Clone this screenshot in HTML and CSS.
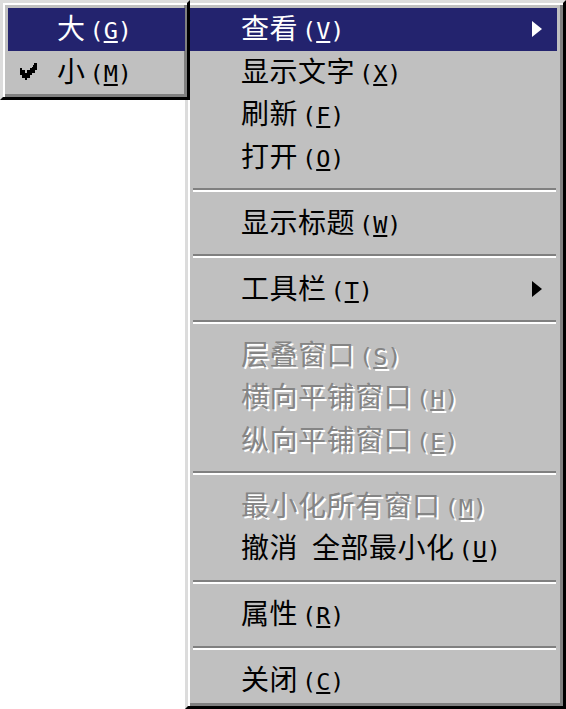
FILE: index.html
```html
<!DOCTYPE html>
<html lang="zh-CN">
<head>
    <meta charset="UTF-8">
    <title>桌面菜单</title>
    <link rel="stylesheet" href="styles.css">
</head>
<body>

<div id="desktop">
    <!-- main context menu -->
    <div class="menu menu-main">
        <div class="item active"><span class="label">查看<span class="key">(<u>V</u>)</span></span><span class="arrow"></span></div>
        <div class="item"><span class="label">显示文字<span class="key">(<u>X</u>)</span></span></div>
        <div class="item"><span class="label">刷新<span class="key">(<u>F</u>)</span></span></div>
        <div class="item"><span class="label">打开<span class="key">(<u>O</u>)</span></span></div>
        <div class="sep"></div>
        <div class="item"><span class="label">显示标题<span class="key">(<u>W</u>)</span></span></div>
        <div class="sep"></div>
        <div class="item"><span class="label">工具栏<span class="key">(<u>T</u>)</span></span><span class="arrow"></span></div>
        <div class="sep"></div>
        <div class="item disabled"><span class="label">层叠窗口<span class="key">(<u>S</u>)</span></span></div>
        <div class="item disabled"><span class="label">横向平铺窗口<span class="key">(<u>H</u>)</span></span></div>
        <div class="item disabled"><span class="label">纵向平铺窗口<span class="key">(<u>E</u>)</span></span></div>
        <div class="sep"></div>
        <div class="item disabled"><span class="label">最小化所有窗口<span class="key">(<u>M</u>)</span></span></div>
        <div class="item"><span class="label">撤消<span class="space"></span>全部最小化<span class="key">(<u>U</u>)</span></span></div>
        <div class="sep"></div>
        <div class="item"><span class="label">属性<span class="key">(<u>R</u>)</span></span></div>
        <div class="sep"></div>
        <div class="item"><span class="label">关闭<span class="key">(<u>C</u>)</span></span></div>
    </div>

    <!-- "查看" submenu, opened to the left -->
    <div class="menu menu-sub">
        <div class="item active"><span class="mark"></span><span class="label">大<span class="key">(<u>G</u>)</span></span></div>
        <div class="item">
            <span class="mark">
                <svg width="17" height="17" viewBox="0 0 7 7" shape-rendering="crispEdges">
                    <path d="M6 0h1v3h-1v1h-1v1h-1v1h-1v1h-1v-1h-1v-1h-1v-3h1v1h1v1h1v-1h1v-1h1z" fill="#000"/>
                </svg>
            </span><span class="label">小<span class="key">(<u>M</u>)</span></span>
        </div>
    </div>
</div>

</body>
</html>
```

FILE: styles.css
```css
/* Page */
body {
    margin: 0;
    background: #fff;
    font-family: "Noto Sans CJK SC", sans-serif;
}

#desktop {
    position: relative;
    width: 566px;
    height: 709px;
    overflow: hidden;
}

/* Win98 style menu box */
.menu {
    box-sizing: border-box;
    background-color: #c0c0c0;
    border: 3px solid;
    border-color: #dcdcdc #000 #000 #dcdcdc;
    box-shadow: inset 2px 2px 0 #fff, inset -3px -3px 0 #808080;
}

.menu-main {
    margin-left: 185px;
    width: 381px;
    height: 709px;
    padding: 5px 6px 4.5px 2px;
}

/* submenu lies over the main menu */
.menu-sub {
    position: absolute;
    top: 0;
    left: 0;
    width: 190px;
    padding: 5px 2px 4px 5px;
    z-index: 2;
}

/* Menu items */
.item {
    display: flex;
    align-items: center;
    height: 42.5px;
    font-size: 28px;
    letter-spacing: 0.5px;
    color: #000;
}

.menu-main .item {
    padding-left: 51px;
}

.label {
    line-height: 42px;
    white-space: nowrap;
}

.key {
    margin-left: 4px;
    font-family: "DejaVu Sans Mono", monospace;
    font-size: 23.5px;
    letter-spacing: 0;
}

.key u {
    text-decoration-thickness: 2px;
    text-underline-offset: 2px;
}

.space {
    display: inline-block;
    width: 14px;
}

.item.active {
    background-color: #23236e; /* navy highlight */
    color: #fff;
}

.item.disabled {
    color: #858585;
    text-shadow: 2px 2px 0 #fff;
}

/* check mark column in submenu */
.mark {
    flex: 0 0 49px;
    display: flex;
    align-items: center;
    padding-left: 12px;
    box-sizing: border-box;
}

.mark svg {
    display: block;
}

/* submenu arrow */
.arrow {
    margin-left: auto;
    margin-right: 15px;
    width: 0;
    height: 0;
    border-top: 8px solid transparent;
    border-bottom: 8px solid transparent;
    border-left: 10px solid #000;
}

.item.active .arrow {
    border-left-color: #fff;
}

/* Separators */
.sep {
    box-sizing: border-box;
    height: 23.5px;
    padding-top: 10px;
    margin: 0 1px 0 3px;
}

.sep::before {
    content: "";
    display: block;
    height: 2px;
    background-color: #808080;
    border-bottom: 2px solid #fff;
}
```
